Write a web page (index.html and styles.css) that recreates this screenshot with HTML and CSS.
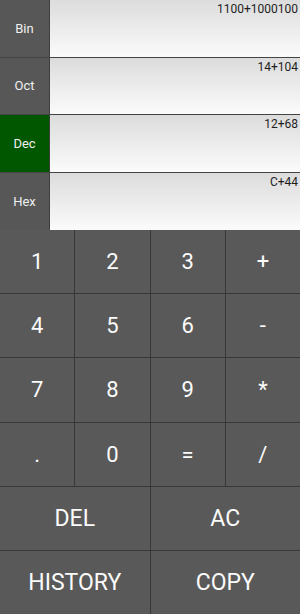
FILE: index.html
```html
<!DOCTYPE html>
<html>
<head>
<meta charset="utf-8">
<link rel="stylesheet" href="styles.css">
</head>
<body>
<div class="app">
  <div class="bases">
    <div class="base-row"><div class="label">Bin</div><div class="display">1100+1000100</div></div>
    <div class="base-row"><div class="label">Oct</div><div class="display">14+104</div></div>
    <div class="base-row"><div class="label active">Dec</div><div class="display">12+68</div></div>
    <div class="base-row"><div class="label">Hex</div><div class="display">C+44</div></div>
  </div>
  <div class="keys">
    <div class="key">1</div><div class="key">2</div><div class="key">3</div><div class="key">+</div>
    <div class="key">4</div><div class="key">5</div><div class="key">6</div><div class="key">-</div>
    <div class="key">7</div><div class="key">8</div><div class="key">9</div><div class="key">*</div>
    <div class="key">.</div><div class="key">0</div><div class="key">=</div><div class="key">/</div>
    <div class="key wide">DEL</div><div class="key wide">AC</div>
    <div class="key wide">HISTORY</div><div class="key wide">COPY</div>
  </div>
</div>
</body>
</html>
```
FILE: styles.css
```css
html, body {
  margin: 0;
  padding: 0;
}
body {
  width: 300px;
  height: 614px;
  overflow: hidden;
  font-family: Roboto, "Noto Sans", sans-serif;
  background: #3a3a3a;
}
.app {
  display: flex;
  flex-direction: column;
  height: 614px;
}
.bases {
  height: 230px;
  display: grid;
  grid-template-rows: repeat(4, 1fr);
  background: #3e3e3e;
}
.base-row {
  display: grid;
  grid-template-columns: 49px 1fr;
  column-gap: 1px;
  border-bottom: 1px solid #444;
}
.base-row:last-child {
  border-bottom: none;
}
.label {
  background: #575757;
  color: #f0f0f0;
  font-size: 13px;
  display: flex;
  align-items: center;
  justify-content: center;
}
.label.active {
  background: #005700;
}
.display {
  background: linear-gradient(#dcdcdc, #fbfbfb);
  color: #1e1e1e;
  font-size: 12px;
  text-align: right;
  padding: 2px 2px 0 0;
}
.keys {
  flex: 1;
  display: grid;
  grid-template-columns: repeat(4, 1fr);
  grid-template-rows: repeat(6, 1fr);
  gap: 1px;
  background: #383838;
}
.key {
  background: #595959;
  color: #fbfbfb;
  font-size: 22px;
  display: flex;
  align-items: center;
  justify-content: center;
}
.key.wide {
  grid-column: span 2;
  font-size: 23px;
}
```
